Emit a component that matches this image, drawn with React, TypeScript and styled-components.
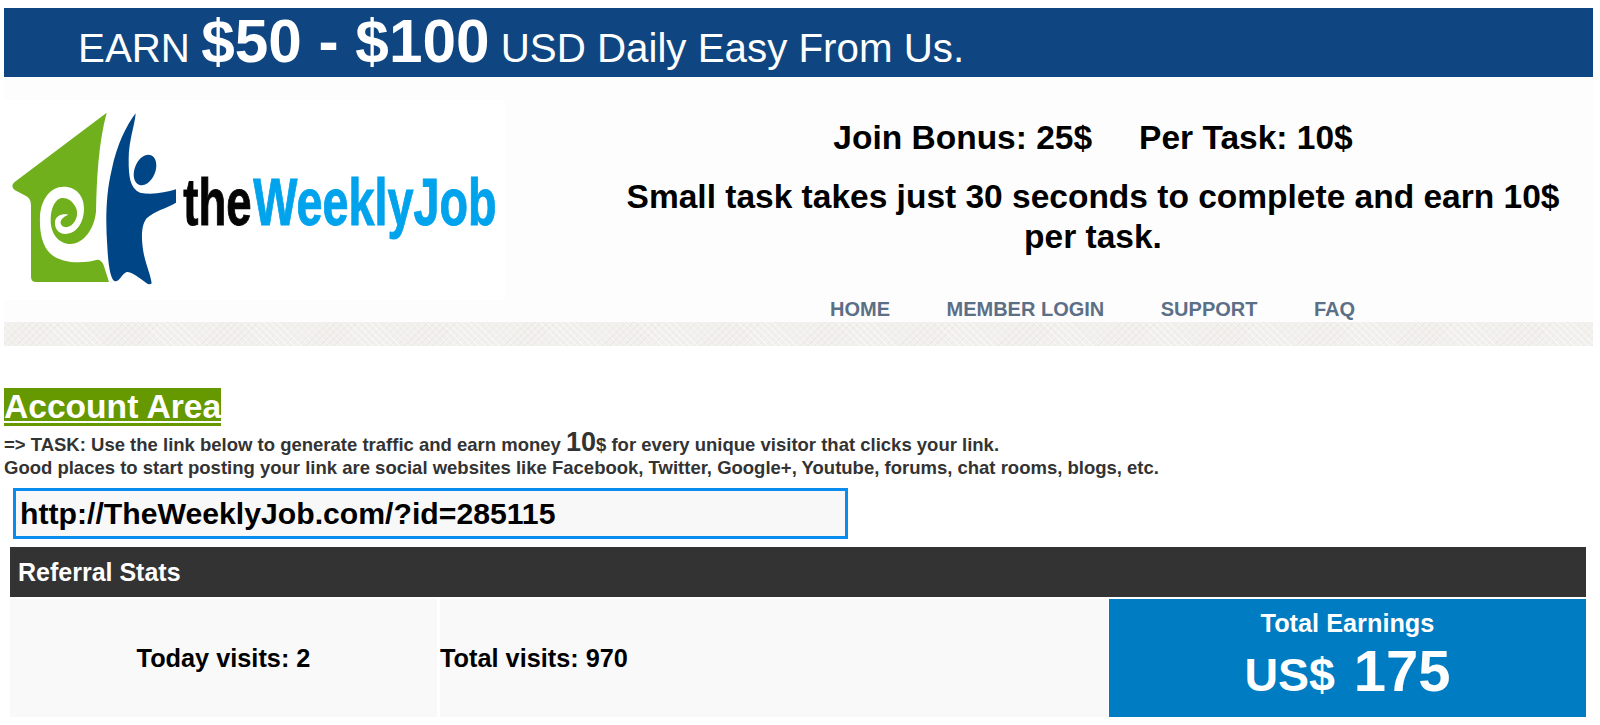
import React from 'react';
import styled, { createGlobalStyle } from 'styled-components';

const GlobalStyle = createGlobalStyle`
  html, body {
    margin: 0;
    padding: 0;
    background: #fff;
    font-family: "Liberation Sans", Arial, sans-serif;
  }
`

function Logo() {
  return (
    <LogoSvg viewBox="12 60 1503 600" aria-label="theWeeklyJob">
      <path
        fill="#6fb01c"
        d="M320 98 L44 306 Q30 318 44 330 L78 348 Q93 356 93 376 L93 590 Q93 606 108 606 L327 606 L311 556 Q305 538 285 536 L288 395 C290 300 295 190 320 98 Z"
      />
      <path
        fill="#fff"
        d="M300 537 C260 550 190 556 150 520 C125 495 118 450 120 410 C122 360 150 320 192 320 C230 320 252 350 252 385 C252 425 232 462 195 462 C175 462 163 445 165 425 C167 408 185 400 205 404 C190 410 180 420 182 430 C186 445 205 445 218 432 C232 418 236 395 225 378 C215 360 200 352 185 354 C165 358 152 385 152 420 C152 460 175 492 212 492 C250 490 282 450 288 395 L322 420 L322 537 Z"
      />
      <path
        fill="#004687"
        d="M407 100 C404 140 386 180 386 240 C386 290 390 325 420 338 C455 346 495 338 528 328 L528 368 C500 385 465 392 440 415 C420 440 425 490 432 525 C440 560 452 585 455 610 Q448 616 438 608 C420 595 395 575 380 576 C365 582 358 606 345 604 C332 600 325 560 322 500 C316 420 318 340 335 270 C350 195 380 135 407 100 Z"
      />
      <ellipse cx="435" cy="270" rx="31" ry="48" fill="#004687" transform="rotate(22 435 270)" />
      <LogoWord transform="translate(550 435) scale(.69 1)" fill="#050505" stroke="#050505">the</LogoWord>
      <LogoWord transform="translate(760 435) scale(.708 1)" fill="#00a3ec" stroke="#00a3ec">WeeklyJob</LogoWord>
    </LogoSvg>
  );
}

function App() {
  return (
    <Page>
      <GlobalStyle />
      <Banner>
        EARN <BannerBig>$50 - $100</BannerBig> USD Daily Easy From Us.
      </Banner>
      <Header>
        <LogoBox>
          <Logo />
        </LogoBox>
        <HeaderInfo>
          <Bonus>
            <span>Join Bonus: 25$</span>
            <span>Per Task: 10$</span>
          </Bonus>
          <Tagline>Small task takes just 30 seconds to complete and earn 10$ per task.</Tagline>
          <Nav>
            <NavLink href="#">HOME</NavLink>
            <NavLink href="#">MEMBER LOGIN</NavLink>
            <NavLink href="#">SUPPORT</NavLink>
            <NavLink href="#">FAQ</NavLink>
          </Nav>
        </HeaderInfo>
      </Header>
      <Strip />
      <Content>
        <AreaTitle>Account Area</AreaTitle>
        <TaskText>
          =&gt; TASK: Use the link below to generate traffic and earn money <TaskBig>10</TaskBig>$ for every unique visitor that clicks your link.
          <br />
          Good places to start posting your link are social websites like Facebook, Twitter, Google+, Youtube, forums, chat rooms, blogs, etc.
        </TaskText>
        <RefInput readOnly value="http://TheWeeklyJob.com/?id=285115" />
        <Stats>
          <StatsHead>Referral Stats</StatsHead>
          <StatsRow>
            <StatCell $center>Today visits: 2</StatCell>
            <StatCell>Total visits: 970</StatCell>
            <Earnings>
              <EarnLabel>Total Earnings</EarnLabel>
              <EarnValue>US$ <EarnNum>175</EarnNum></EarnValue>
            </Earnings>
          </StatsRow>
        </Stats>
      </Content>
    </Page>
  );
}

export default App;

const Page = styled.div`
  padding: 8px 7px 0 4px;
  height: 717px;
  overflow: hidden;
`

const Banner = styled.div`
  box-sizing: border-box;
  height: 69px;
  padding: 4px 0 0 74px;
  background-color: #0f4681;
  color: #fff;
  font-size: 40.3px;
  line-height: 58px;
  white-space: nowrap;
`

const BannerBig = styled.b`
  font-size: 60.3px;
  line-height: 58px;
`

const Header = styled.div`
  height: 245px;
  background-color: #fdfdfd;
  display: flex;
`

const LogoBox = styled.div`
  width: 501px;
  height: 200px;
  margin-top: 23px;
  background-color: #fff;
  flex-shrink: 0;
`

const LogoSvg = styled.svg`
  display: block;
  width: 501px;
  height: 200px;
`

const LogoWord = styled.text`
  font-family: "Liberation Sans", Arial, sans-serif;
  font-weight: bold;
  font-size: 198px;
  stroke-width: 3px;
`

const HeaderInfo = styled.div`
  flex: 1;
  padding: 0 20px 0 108px;
  color: #000;
  font-weight: bold;
  text-align: center;
`

const Bonus = styled.div`
  display: flex;
  justify-content: center;
  gap: 47px;
  font-size: 33.5px;
  line-height: 37px;
  margin-top: 42px;
`

const Tagline = styled.div`
  font-size: 33.5px;
  line-height: 40px;
  margin-top: 21px;
`

const Nav = styled.div`
  display: flex;
  gap: 56.5px;
  margin-top: 41px;
  margin-left: 217px;
`

const NavLink = styled.a`
  color: #5b6f87;
  font-size: 20px;
  line-height: 23px;
  text-decoration: none;
`

const Strip = styled.div`
  height: 24px;
  background-color: #f2f0ed;
  background-image:
    repeating-linear-gradient(45deg, rgba(255, 255, 255, .45) 0 1px, transparent 1px 5px),
    repeating-linear-gradient(-45deg, rgba(205, 200, 195, .18) 0 1px, transparent 1px 5px);
`

const Content = styled.div`
  padding-top: 42px;
`

const AreaTitle = styled.h1`
  display: table;
  margin: 0;
  background-color: #669900;
  color: #fff;
  font-size: 33.6px;
  line-height: 38px;
  height: 38px;
  text-decoration: underline;
  text-decoration-thickness: 2px;
  text-underline-offset: 3px;
`

const TaskText = styled.div`
  color: #333;
  font-size: 18.5px;
  font-weight: bold;
  line-height: 23px;
  margin-top: 6px;
`

const TaskBig = styled.span`
  font-size: 27px;
  line-height: 20px;
`

const RefInput = styled.input`
  display: block;
  box-sizing: border-box;
  width: 835px;
  height: 51px;
  margin: 9px 0 0 9px;
  padding: 0 4px;
  border: 3px solid #0a8cee;
  outline: none;
  background-color: #f8f8f8;
  color: #000;
  font-family: "Liberation Sans", Arial, sans-serif;
  font-size: 30.2px;
  font-weight: bold;
`

const Stats = styled.div`
  margin: 8px 7px 0 6px;
`

const StatsHead = styled.div`
  height: 50px;
  background-color: #333;
  color: #fff;
  font-size: 25px;
  font-weight: bold;
  line-height: 50px;
  padding-left: 8px;
`

const StatsRow = styled.div`
  display: grid;
  grid-template-columns: 427px 668px 1fr;
  gap: 0 3px;
  margin-top: 2px;
  height: 118px;
`

const StatCell = styled.div<{ $center?: boolean }>`
  display: flex;
  align-items: center;
  justify-content: ${p => (p.$center ? 'center' : 'flex-start')};
  background-color: #f9f9f9;
  color: #000;
  font-size: 25.3px;
  font-weight: bold;
`

const Earnings = styled.div`
  background-color: #007cc2;
  color: #fff;
  font-weight: bold;
  text-align: center;
  margin-left: -2px;
`

const EarnLabel = styled.div`
  font-size: 25.3px;
  line-height: 28px;
  margin-top: 10px;
`

const EarnValue = styled.div`
  font-size: 46.5px;
  line-height: 68px;
`

const EarnNum = styled.span`
  font-size: 58px;
  margin-left: 6px;
`
